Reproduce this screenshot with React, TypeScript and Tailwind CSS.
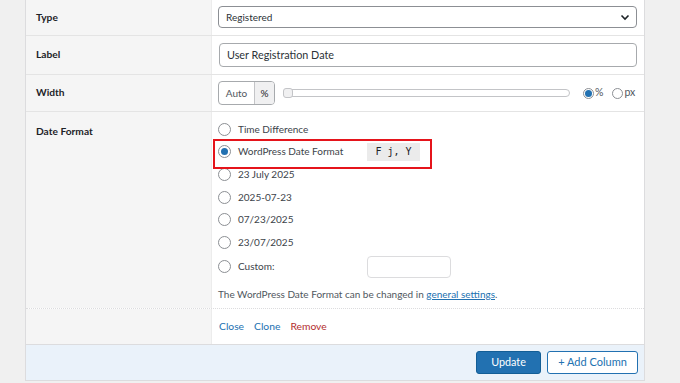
import React from "react";

const font = { fontFamily: 'Lato, "Noto Sans", sans-serif' };

function Radio({ checked = false, size = 13 }: { checked?: boolean; size?: number }) {
  return (
    <span
      className="inline-flex items-center justify-center rounded-full border border-[#8c8f94] bg-white shrink-0"
      style={{ width: size, height: size }}
    >
      {checked && <span className="block w-[7px] h-[7px] rounded-full bg-[#2271b1]" />}
    </span>
  );
}

function Label({ children }: { children: React.ReactNode }) {
  return <span className="text-[10.2px] font-bold text-[#1d2327]">{children}</span>;
}

export default function App() {
  const options = ["Time Difference", "WordPress Date Format", "23 July 2025", "2025-07-23", "07/23/2025", "23/07/2025"];
  return (
    <div className="w-[680px] h-[383px] bg-[#f0f0f0] overflow-hidden pl-[25px]" style={font}>
      <div className="w-[620px] border-x border-b border-[#dcdcde] bg-white text-[#2c3338]">
        {/* Type */}
        <div className="flex h-[36px] border-b border-[#e4e4e4]">
          <div className="w-[186px] bg-[#f5f5f5] border-r border-[#ececec] pl-[10px] flex items-center">
            <Label>Type</Label>
          </div>
          <div className="flex-1 pl-[6px] pr-[7px] pt-[6px]">
            <div className="h-[22px] rounded-[4px] border border-[#8c8f94] flex items-center justify-between pl-[7px] pr-[6px]">
              <span className="text-[10px] text-[#2c3338]">Registered</span>
              <svg width="10" height="7" viewBox="0 0 10 7"><polyline points="1.5,1.5 5,5 8.5,1.5" fill="none" stroke="#1d2327" strokeWidth="1.6" /></svg>
            </div>
          </div>
        </div>
        {/* Label */}
        <div className="flex h-[39px] border-b border-[#e4e4e4]">
          <div className="w-[186px] bg-[#f5f5f5] border-r border-[#ececec] pl-[10px] flex items-center">
            <Label>Label</Label>
          </div>
          <div className="flex-1 pl-[7px] pr-[7px] pt-[7px]">
            <div className="h-[24px] rounded-[4px] border border-[#a7aaad] flex items-center pl-[7px]">
              <span className="text-[10.8px] text-[#2c3338]">User Registration Date</span>
            </div>
          </div>
        </div>
        {/* Width */}
        <div className="flex h-[37px] border-b border-[#e4e4e4]">
          <div className="w-[186px] bg-[#f5f5f5] border-r border-[#ececec] pl-[10px] flex items-center">
            <Label>Width</Label>
          </div>
          <div className="flex-1 pl-[6px] pr-[8px] flex items-center">
            <div className="flex h-[24px] rounded-[4px] border border-[#a7aaad] overflow-hidden text-[10px] text-[#50575e]">
              <span className="w-[35px] flex items-end justify-center pb-[3px]">Auto</span>
              <span className="w-[20px] border-l border-[#c3c4c7] bg-[#f0f0f1] flex items-center justify-center text-[#1d2327]">%</span>
            </div>
            <div className="relative ml-[8px] w-[287px] h-[8px] rounded-full border border-[#c3c4c7] bg-white">
              <span className="absolute left-[-1px] top-[-2px] w-[10px] h-[10px] rounded-[3px] border border-[#c3c4c7] bg-[#f0f0f1]" />
            </div>
            <div className="ml-[13px] flex items-center text-[10.5px] text-[#50575e]">
              <Radio checked size={11} />
              <span className="ml-[1px]">%</span>
              <div className="ml-[9px] flex items-center">
                <Radio size={11} />
              </div>
              <span className="ml-[1px]">px</span>
            </div>
          </div>
        </div>
        {/* Date Format */}
        <div className="flex h-[197px] border-b border-dotted border-[#dcdcde]">
          <div className="w-[186px] bg-[#f5f5f5] border-r border-[#ececec] pl-[10px] pt-[9px] leading-[16px]">
            <Label>Date Format</Label>
          </div>
          <div className="relative flex-1 pl-[6px] pt-[6px] text-[10px] text-[#3c434a]">
            <div className="absolute left-[1px] top-[27px] w-[219px] h-[30px] border-2 border-[#e5141b] pointer-events-none" />
            {options.map((o, i) => (
              <div key={o} className="h-[22.6px] flex items-center">
                <Radio checked={i === 1} />
                <span className={i === 1 ? "ml-[7px] w-[129px]" : "ml-[7px]"}>{o}</span>
                {i === 1 && (
                  <span className="h-[18px] w-[53px] bg-[#ebebeb] flex items-center justify-center text-[10px] text-[#1d2327]" style={{ fontFamily: '"DejaVu Sans Mono", monospace' }}>
                    F j, Y
                  </span>
                )}
              </div>
            ))}
            <div className="h-[26px] flex items-center">
              <Radio />
              <span className="ml-[7px] w-[129px]">Custom:</span>
              <span className="h-[22px] w-[84px] rounded-[4px] border border-[#dcdcde] bg-white" />
            </div>
            <div className="mt-[6px] leading-[16px] text-[#50575e]">
              The WordPress Date Format can be changed in{" "}
              <span className="text-[#2271b1] underline">general settings</span>.
            </div>
          </div>
        </div>
        {/* Actions */}
        <div className="flex h-[36px] border-b border-[#dcdcde]">
          <div className="w-[186px] bg-[#f5f5f5] border-r border-[#ececec]" />
          <div className="flex-1 pl-[7px] flex items-center gap-[10px] text-[10.3px]">
            <span className="text-[#2271b1]">Close</span>
            <span className="text-[#2271b1]">Clone</span>
            <span className="text-[#b32d2e]">Remove</span>
          </div>
        </div>
        {/* Footer */}
        <div className="h-[35px] bg-[#eaf2fa] flex items-center justify-end gap-[6px] pr-[6px]">
          <span className="h-[23px] w-[65px] rounded-[3px] border border-[#135e96] bg-[#2271b1] text-white text-[10.8px] flex items-center justify-center">Update</span>
          <span className="h-[23px] w-[91px] rounded-[3px] border border-[#2271b1] bg-white text-[#2271b1] text-[11px] flex items-center justify-center">+ Add Column</span>
        </div>
      </div>
    </div>
  );
}
